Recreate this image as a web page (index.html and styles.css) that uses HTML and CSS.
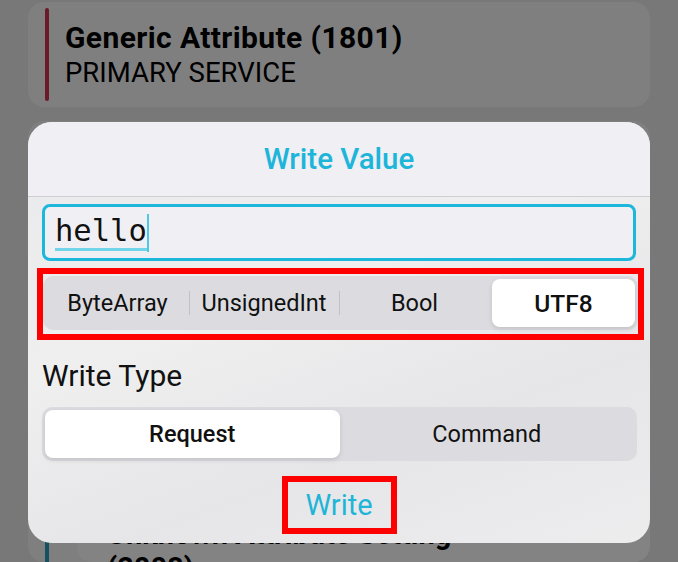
FILE: index.html
```html
<!DOCTYPE html>
<html>
<head>
<meta charset="utf-8">
<link rel="stylesheet" href="styles.css">
</head>
<body>
<div class="page">
  <div class="service-card">
    <div class="bar bar-red"></div>
    <div class="service-text">
      <div class="service-name">Generic Attribute (1801)</div>
      <div class="service-type">PRIMARY SERVICE</div>
    </div>
  </div>
  <div class="service-card second">
    <div class="bar bar-teal"></div>
    <div class="char-card">
      <div class="char-name">Unknown Attribute Setting</div>
      <div class="char-name">(2008)</div>
    </div>
  </div>
</div>

<div class="dialog">
  <div class="dialog-header">Write Value</div>
  <div class="dialog-body">
    <div class="input"><span class="typed">hello</span><span class="cursor"></span></div>
    <div class="highlight seg-wrap">
      <div class="segmented four">
        <div class="seg">ByteArray</div>
        <div class="seg divided">UnsignedInt</div>
        <div class="seg divided">Bool</div>
        <div class="seg selected">UTF8</div>
      </div>
    </div>
    <div class="label">Write Type</div>
    <div class="segmented two">
      <div class="seg selected">Request</div>
      <div class="seg">Command</div>
    </div>
    <div class="actions">
      <div class="highlight write-btn">Write</div>
    </div>
  </div>
</div>
</body>
</html>
```

FILE: styles.css
```css
html, body {
  margin: 0;
  padding: 0;
  overflow: hidden;
}
body {
  width: 678px;
  height: 562px;
  background: #787878;
  font-family: Roboto, "Liberation Sans", sans-serif;
  position: relative;
}
.page {
  display: flex;
  flex-direction: column;
  gap: 14px;
  padding: 2px 28px 0 28px;
  height: 562px;
  box-sizing: border-box;
  overflow: hidden;
}
.service-card {
  background: #7f7f7f;
  border-radius: 16px;
  height: 105px;
  flex: none;
  display: flex;
  padding: 6px 0 0 17px;
  box-sizing: border-box;
  gap: 16px;
}
.service-card.second {
  height: 441px;
  overflow: hidden;
}
.bar {
  width: 4px;
  height: 93px;
  border-radius: 2px;
  flex: none;
}
.bar-red { background: #6b1a2c; }
.bar-teal { background: #14505f; height: 441px; }
.service-text {
  padding-top: 13px;
  color: #000;
}
.service-name {
  font-weight: 700;
  font-size: 30px;
  line-height: 34px;
  letter-spacing: 0.4px;
}
.service-type {
  font-size: 27.5px;
  line-height: 34px;
  margin-top: 1px;
}
.char-card {
  background: #838383;
  border-radius: 14px;
  flex: 1;
  margin-left: 12px;
  padding: 390px 0 0 30px;
  font-size: 29px;
  line-height: 34px;
  font-weight: 700;
  color: #000;
  white-space: nowrap;
}

.dialog {
  position: absolute;
  left: 28px;
  top: 122px;
  width: 622px;
  height: 421px;
  border-radius: 24px;
  overflow: hidden;
  background: linear-gradient(160deg, #e8e9eb 0%, #efefef 40%, #e6e6e9 70%, #ededee 100%);
  display: flex;
  flex-direction: column;
}
.dialog-header {
  height: 75px;
  flex: none;
  background: #efeff4;
  border-bottom: 1px solid #cfcfd3;
  color: #1db5d9;
  font-size: 29.5px;
  font-weight: 500;
  display: flex;
  align-items: center;
  justify-content: center;
  box-sizing: border-box;
}
.dialog-body {
  display: flex;
  flex-direction: column;
  padding: 0 14px;
}
.input {
  margin-top: 7px;
  height: 57px;
  box-sizing: border-box;
  border: 3px solid #1cb7db;
  border-radius: 8px;
  background: #f0f0f4;
  display: flex;
  align-items: center;
  padding-left: 10px;
}
.typed {
  font-family: "DejaVu Sans Mono", monospace;
  font-size: 30.5px;
  line-height: 34px;
  color: #111;
  border-bottom: 3px solid #72d4e8;
}
.cursor {
  width: 2px;
  height: 38px;
  background: #4ec7e2;
}
.highlight {
  border: 6px solid #ff0000;
}
.seg-wrap {
  margin: 7px -8px 0 -5px;
  padding: 2px 0 4px 0;
}
.segmented {
  display: grid;
  background: #dcdce0;
  border-radius: 10px;
  padding: 3px;
  height: 54px;
  box-sizing: border-box;
}
.segmented.four {
  grid-template-columns: 143px 150px 151px 1fr;
}
.segmented.two {
  grid-template-columns: repeat(2, 1fr);
  margin-top: 14px;
  margin-right: -1px;
}
.seg {
  display: flex;
  align-items: center;
  justify-content: center;
  font-size: 23.5px;
  color: #111;
  position: relative;
}
.seg.divided::before {
  content: "";
  position: absolute;
  left: 0;
  top: 12px;
  bottom: 12px;
  width: 1px;
  background: #c2c2c6;
}
.seg.selected {
  background: #ffffff;
  border-radius: 8px;
  font-weight: 500;
  box-shadow: 0 2px 5px rgba(0,0,0,0.12);
}
.segmented.four .seg.selected {
  font-size: 24.5px;
  margin-left: 2px;
}
.label {
  margin-top: 19px;
  font-size: 30px;
  line-height: 34px;
  color: #111;
}
.actions {
  display: flex;
  justify-content: center;
  margin-top: 15px;
}
.write-btn {
  width: 115px;
  height: 58px;
  box-sizing: border-box;
  display: flex;
  align-items: center;
  justify-content: center;
  color: #1fb5d8;
  font-size: 29px;
}
```
